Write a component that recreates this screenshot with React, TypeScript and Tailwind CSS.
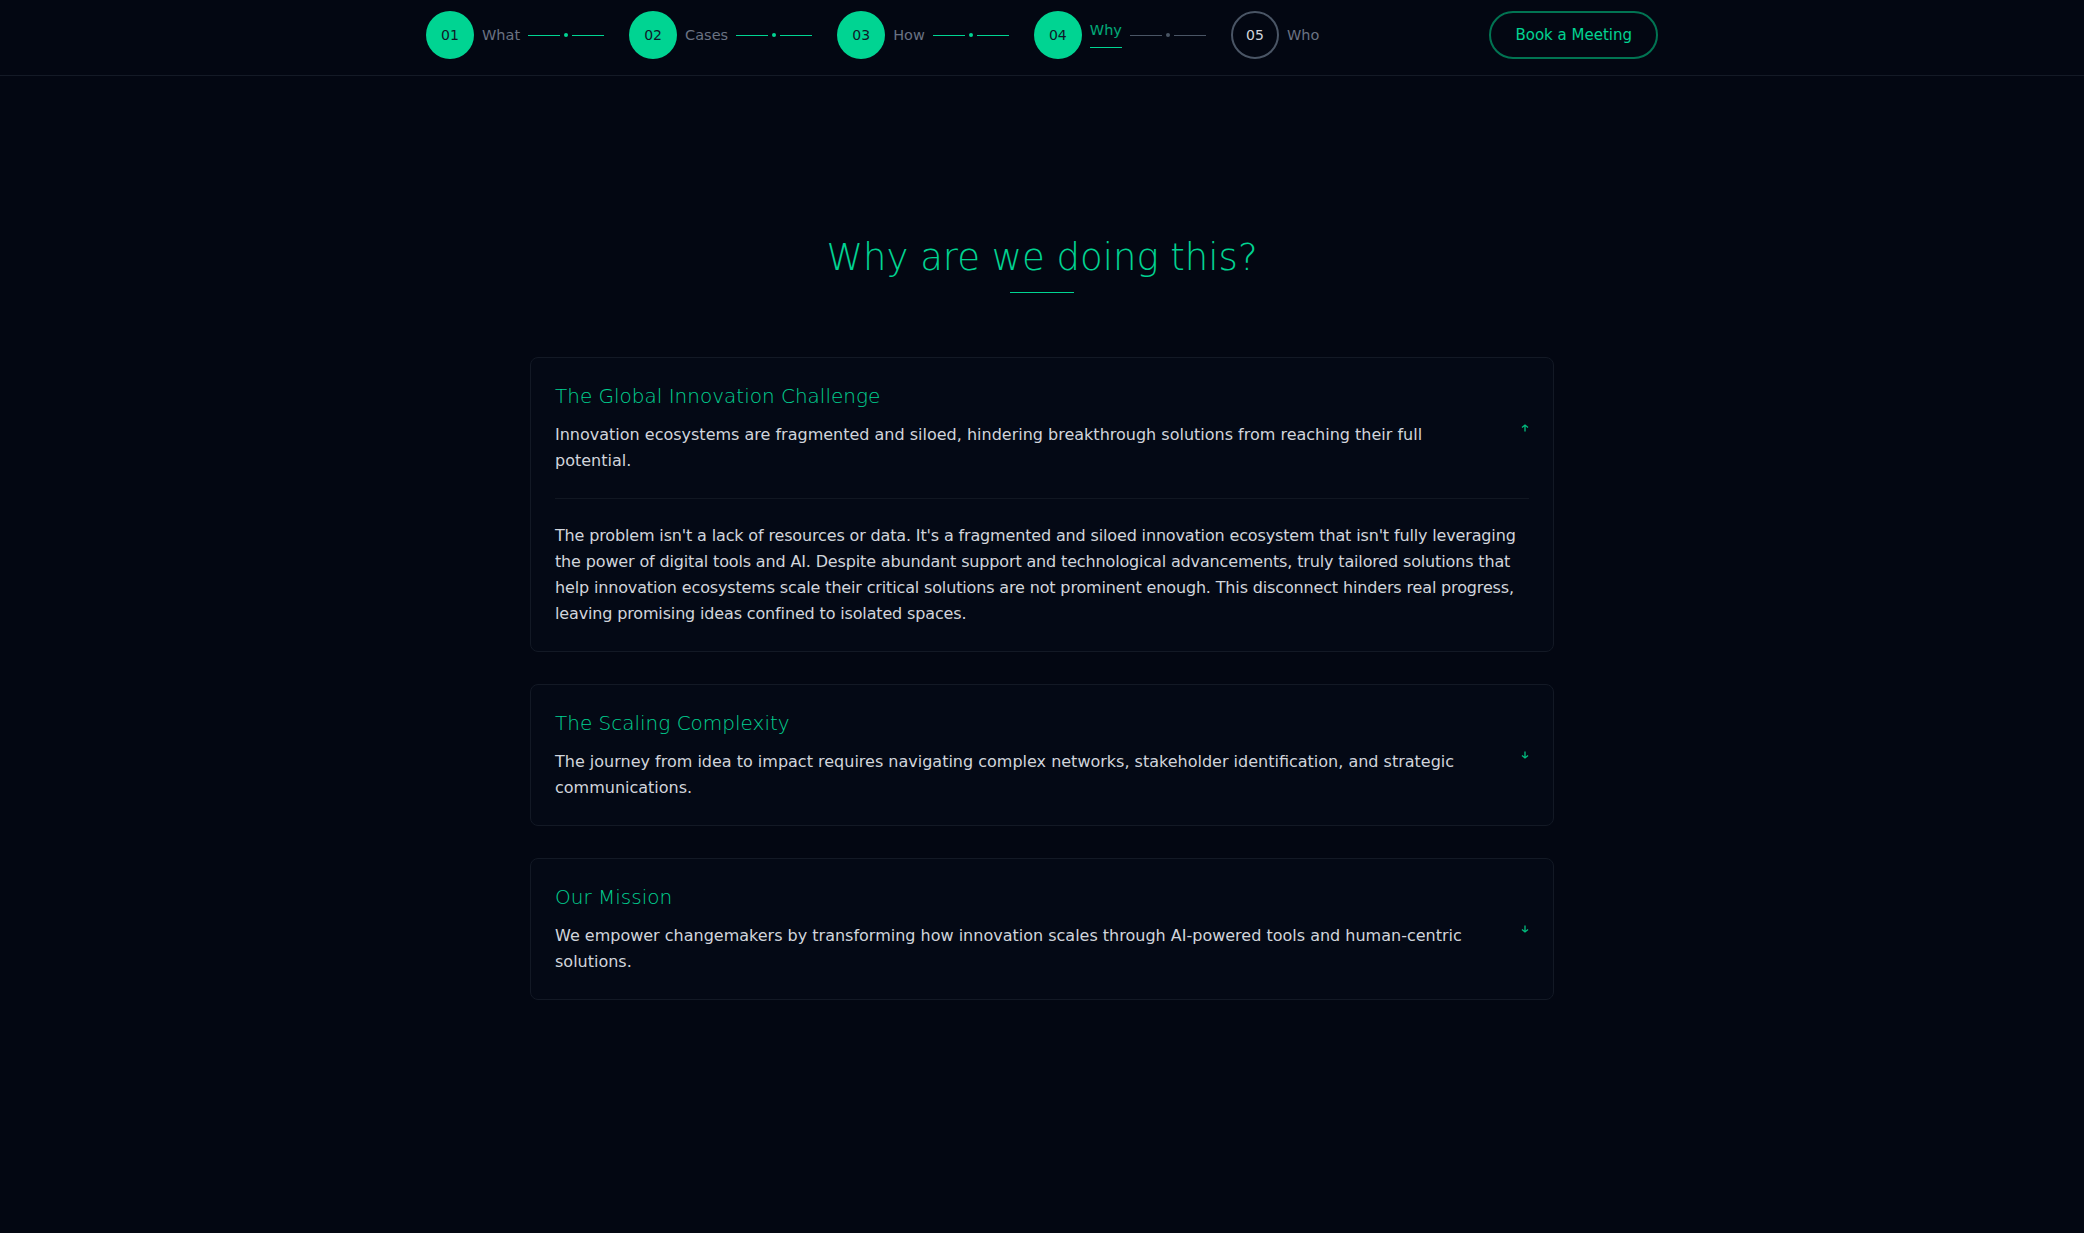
import { useState } from "react";

const steps = [
  { n: "01", label: "What", done: true },
  { n: "02", label: "Cases", done: true },
  { n: "03", label: "How", done: true },
  { n: "04", label: "Why", done: true, active: true },
  { n: "05", label: "Who", done: false },
];

const sections = [
  {
    title: "The Global Innovation Challenge",
    summary:
      "Innovation ecosystems are fragmented and siloed, hindering breakthrough solutions from reaching their full potential.",
    details:
      "The problem isn't a lack of resources or data. It's a fragmented and siloed innovation ecosystem that isn't fully leveraging the power of digital tools and AI. Despite abundant support and technological advancements, truly tailored solutions that help innovation ecosystems scale their critical solutions are not prominent enough. This disconnect hinders real progress, leaving promising ideas confined to isolated spaces.",
  },
  {
    title: "The Scaling Complexity",
    summary:
      "The journey from idea to impact requires navigating complex networks, stakeholder identification, and strategic communications.",
    details:
      "Scaling requires finding the right partners, understanding who holds influence, and communicating value clearly to each of them.",
  },
  {
    title: "Our Mission",
    summary:
      "We empower changemakers by transforming how innovation scales through AI-powered tools and human-centric solutions.",
    details:
      "We combine AI-powered mapping with human expertise so that promising solutions reach the people and places that need them.",
  },
];

function Arrow({ up }: { up: boolean }) {
  return (
    <svg width="8" height="8" viewBox="0 0 8 8" fill="none" stroke="currentColor" strokeWidth={1.3}>
      {up ? (
        <path d="M4 7.5V1M1 3.5L4 1L7 3.5" />
      ) : (
        <path d="M4 0.5V7M1 4.5L4 7L7 4.5" />
      )}
    </svg>
  );
}

function Header() {
  return (
    <header className="border-b border-[#141a26]">
      <nav className="mx-auto max-w-7xl px-6 pt-[11px] pb-4 flex items-center justify-between">
        <div className="flex items-center gap-[25px]">
          {steps.map((step, i) => {
            const next = steps[i + 1];
            const lineColor = next && next.done ? "bg-emerald-400" : "bg-gray-600";
            return (
              <div key={step.n} className="flex items-center gap-2">
                <div
                  className={
                    step.done
                      ? "size-12 rounded-full bg-emerald-400 flex items-center justify-center text-sm text-gray-900"
                      : "size-12 rounded-full border-2 border-gray-600 flex items-center justify-center text-sm text-gray-300"
                  }
                >
                  {step.n}
                </div>
                {step.active ? (
                  <span className="text-[14.5px] text-emerald-400/80 border-b border-emerald-400 pb-1.5 mb-0.5">
                    {step.label}
                  </span>
                ) : (
                  <span className="text-[14.5px] text-gray-500 mt-0.5">{step.label}</span>
                )}
                {next && (
                  <div className="flex items-center gap-1">
                    <span className={`w-8 h-px ${lineColor}`} />
                    <span className={`size-1 rounded-full ${lineColor}`} />
                    <span className={`w-8 h-px ${lineColor}`} />
                  </div>
                )}
              </div>
            );
          })}
        </div>
        <button className="h-12 px-6 rounded-full border-2 border-emerald-500/60 text-[15px] text-emerald-400">
          Book a Meeting
        </button>
      </nav>
    </header>
  );
}

export default function App() {
  const [open, setOpen] = useState(0);

  return (
    <div className="min-h-screen bg-[#030712] font-['DejaVu_Sans',sans-serif]">
      <Header />
      <main className="mx-auto max-w-5xl pt-[160px] pb-32">
        <div className="flex flex-col items-center">
          <h2 className="text-[37px] leading-[1.2] font-light text-emerald-400">Why are we doing this?</h2>
          <div className="mt-3 w-16 h-px bg-emerald-400" />
        </div>

        <div className="mt-16 flex flex-col gap-8">
          {sections.map((s, i) => (
            <div key={s.title} className="rounded-lg border border-[#131925] bg-[#040915]">
              <button
                onClick={() => setOpen(open === i ? -1 : i)}
                className="w-full p-6 flex items-center gap-6 text-left"
              >
                <div className="flex-1">
                  <h3 className="text-xl font-light text-emerald-400 mb-3">{s.title}</h3>
                  <p className="text-base leading-[26px] text-gray-300">{s.summary}</p>
                </div>
                <span className="w-3 flex justify-end text-emerald-500">
                  <Arrow up={open === i} />
                </span>
              </button>
              {open === i && (
                <div className="mx-6 border-t border-[#111722] pt-6 pb-6">
                  <p className="text-base leading-[26px] tracking-[-0.15px] text-gray-300">{s.details}</p>
                </div>
              )}
            </div>
          ))}
        </div>
      </main>
    </div>
  );
}
